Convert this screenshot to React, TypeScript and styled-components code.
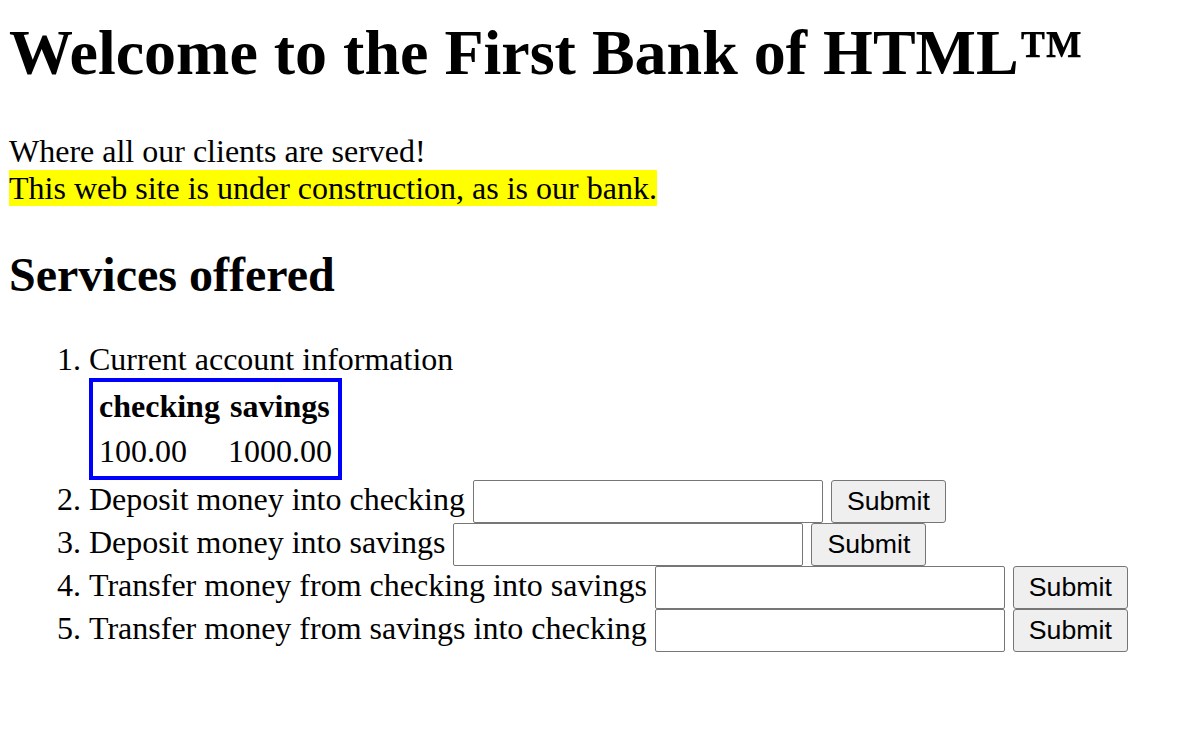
import React from 'react';
import styled, { createGlobalStyle } from 'styled-components';

const GlobalStyle = createGlobalStyle`
  html,
  body {
    margin: 0;
    background: #ffffff;
  }

  body {
    color: #000000;
    font-family: "Liberation Serif", "Times New Roman", serif;
    font-size: 32px;
  }
`;

const Page = styled.main`
  padding: 8px 8px 8px 9px;
`;

const Title = styled.h1`
  margin: 8px 0 42.88px;
  font-size: 64px;
  font-weight: bold;
`;

const Tagline = styled.p`
  margin: 32px 0;
`;

const Notice = styled.span`
  background: #ffff00;
`;

const SectionTitle = styled.h2`
  margin: 39.84px 0 38.84px;
  font-size: 48px;
  font-weight: bold;
`;

const ServiceList = styled.ol`
  margin: 32px 0;
  padding-left: 80px;
`;

const ServiceItem = styled.li`
  font-size: 32px;
`;

const AccountTable = styled.table`
  font: inherit;
  border: 4px solid #0000ff;
  border-spacing: 4px;

  th,
  td {
    padding: 2px;
  }

  th {
    font-weight: bold;
    text-align: center;
  }

  td {
    text-align: left;
  }
`;

const AmountInput = styled.input`
  box-sizing: border-box;
  width: 350px;
  height: 43px;
  margin: 0;
  padding: 2px 4px;
  border: 1px solid #767676;
  border-radius: 2px;
  background: #ffffff;
  font-family: "Liberation Sans", Arial, sans-serif;
  font-size: 26.67px;
  vertical-align: baseline;
`;

const SubmitButton = styled.button`
  box-sizing: border-box;
  height: 43px;
  margin: 0;
  padding: 0 15px;
  border: 1px solid #767676;
  border-radius: 3px;
  background: #efefef;
  color: #000000;
  font-family: "Liberation Sans", Arial, sans-serif;
  font-size: 26.67px;
  vertical-align: baseline;
`;

const actions = [
  'Deposit money into checking',
  'Deposit money into savings',
  'Transfer money from checking into savings',
  'Transfer money from savings into checking',
];

export default function App() {
  return (
    <>
      <GlobalStyle />
      <Page>
        <Title>Welcome to the First Bank of HTML™</Title>
        <Tagline>
          Where all our clients are served!
          <br />
          <Notice>This web site is under construction, as is our bank.</Notice>
        </Tagline>

        <SectionTitle>Services offered</SectionTitle>
        <ServiceList>
          <ServiceItem>
            Current account information
            <AccountTable>
              <thead>
                <tr>
                  <th>checking</th>
                  <th>savings</th>
                </tr>
              </thead>
              <tbody>
                <tr>
                  <td>100.00</td>
                  <td>1000.00</td>
                </tr>
              </tbody>
            </AccountTable>
          </ServiceItem>
          {actions.map((label) => (
            <ServiceItem key={label}>
              {label} <AmountInput type="text" /> <SubmitButton>Submit</SubmitButton>
            </ServiceItem>
          ))}
        </ServiceList>
      </Page>
    </>
  );
}
